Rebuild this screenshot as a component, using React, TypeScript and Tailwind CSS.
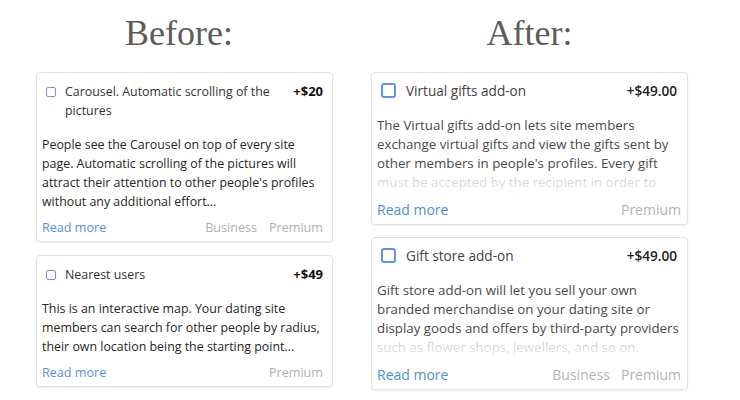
import React from "react";

const sans = { fontFamily: '"Open Sans", "Noto Sans", sans-serif' };

function LeftCard({
  title,
  price,
  desc,
  tags,
  className,
}: {
  title: React.ReactNode;
  price: string;
  desc: React.ReactNode;
  tags: string[];
  className?: string;
}) {
  return (
    <div
      className={
        "rounded-[4px] border border-[#e3e3e3] bg-white pl-[5px] pr-[9px] pt-[9px] pb-[4px] shadow-[0_1px_2px_rgba(0,0,0,0.07)] " +
        (className ?? "")
      }
    >
      <div className="flex items-start text-[12.4px] leading-[19px]">
        <div className="ml-[4px] mt-[5px] h-[10px] w-[10px] shrink-0 rounded-[2px] border-[1.5px] border-[#7091f0]" />
        <div className="ml-[9px] flex-1 whitespace-nowrap text-[#333]">{title}</div>
        <div className="ml-2 text-[13px] font-bold text-[#111]">{price}</div>
      </div>
      <div className="mt-[15px] whitespace-nowrap text-[12.4px] leading-[19px] text-[#262626]">{desc}</div>
      <div className="mt-[7px] flex items-center justify-between text-[12.6px] leading-[19px]">
        <span className="text-[#5b8ee6]">Read more</span>
        <div className="flex gap-[12px] text-[#b0b0b0]">
          {tags.map((t) => (
            <span key={t}>{t}</span>
          ))}
        </div>
      </div>
    </div>
  );
}

function RightCard({
  title,
  price,
  desc,
  tags,
  className,
}: {
  title: string;
  price: string;
  desc: React.ReactNode;
  tags: string[];
  className?: string;
}) {
  return (
    <div
      className={
        "rounded-[4px] border border-[#e3e3e3] bg-white pl-[5px] pr-[6px] pt-[8px] pb-[5px] shadow-[0_1px_2px_rgba(0,0,0,0.07)] " +
        (className ?? "")
      }
    >
      <div className="flex items-start text-[14px] leading-[19px]">
        <div className="ml-[4px] mt-[2px] h-[15px] w-[15px] shrink-0 rounded-[3px] border-2 border-[#5f8ff0]" />
        <div className="ml-[10px] flex-1 text-[13.6px] text-[#444]">{title}</div>
        <div className="mr-[4px] ml-2 text-[13.6px] font-semibold text-[#222]">{price}</div>
      </div>
      <div className="relative mt-[16px] h-[81px] overflow-hidden whitespace-nowrap text-[13.3px] leading-[19px] text-[#4a4a4a]">
        {desc}
        <div className="absolute inset-x-0 bottom-0 h-[26px] bg-linear-to-b from-white/65 to-white/95" />
      </div>
      <div className="mt-[3px] flex items-center justify-between text-[14px] leading-[19px]">
        <span className="text-[#4f8fd8]">Read more</span>
        <div className="flex gap-[11px] text-[#b3b3b3]">
          {tags.map((t) => (
            <span key={t}>{t}</span>
          ))}
        </div>
      </div>
    </div>
  );
}

export default function App() {
  return (
    <div className="flex h-[400px] w-[740px] bg-white" style={sans}>
      <div className="ml-[36px] w-[297px]">
        <div
          className="pt-[15px] pr-[11px] text-center text-[36px] leading-[36px] text-[#5c5c5c]"
          style={{ fontFamily: '"Liberation Serif", serif' }}
        >
          Before:
        </div>
        <LeftCard
          className="mt-[21px]"
          title={
            <>
              Carousel. Automatic scrolling of the
              <br />
              pictures
            </>
          }
          price="+$20"
          desc={
            <>
              People see the Carousel on top of every site
              <br />
              page. Automatic scrolling of the pictures will
              <br />
              attract their attention to other people's profiles
              <br />
              without any additional effort...
            </>
          }
          tags={["Business", "Premium"]}
        />
        <LeftCard
          className="mt-[13px]"
          title="Nearest users"
          price="+$49"
          desc={
            <>
              This is an interactive map. Your dating site
              <br />
              members can search for other people by radius,
              <br />
              their own location being the starting point...
            </>
          }
          tags={["Premium"]}
        />
      </div>
      <div className="ml-[38px] w-[317px]">
        <div
          className="pt-[15px] text-center text-[36px] leading-[36px] text-[#5c5c5c]"
          style={{ fontFamily: '"Liberation Serif", serif' }}
        >
          After:
        </div>
        <RightCard
          className="mt-[21px]"
          title="Virtual gifts add-on"
          price="+$49.00"
          desc={
            <>
              The Virtual gifts add-on lets site members
              <br />
              exchange virtual gifts and view the gifts sent by
              <br />
              other members in people's profiles. Every gift
              <br />
              must be accepted by the recipient in order to
              <br />
              appear on his/her profile.
            </>
          }
          tags={["Premium"]}
        />
        <RightCard
          className="mt-[12px]"
          title="Gift store add-on"
          price="+$49.00"
          desc={
            <>
              Gift store add-on will let you sell your own
              <br />
              branded merchandise on your dating site or
              <br />
              display goods and offers by third-party providers
              <br />
              such as flower shops, jewellers, and so on.
            </>
          }
          tags={["Business", "Premium"]}
        />
      </div>
    </div>
  );
}
